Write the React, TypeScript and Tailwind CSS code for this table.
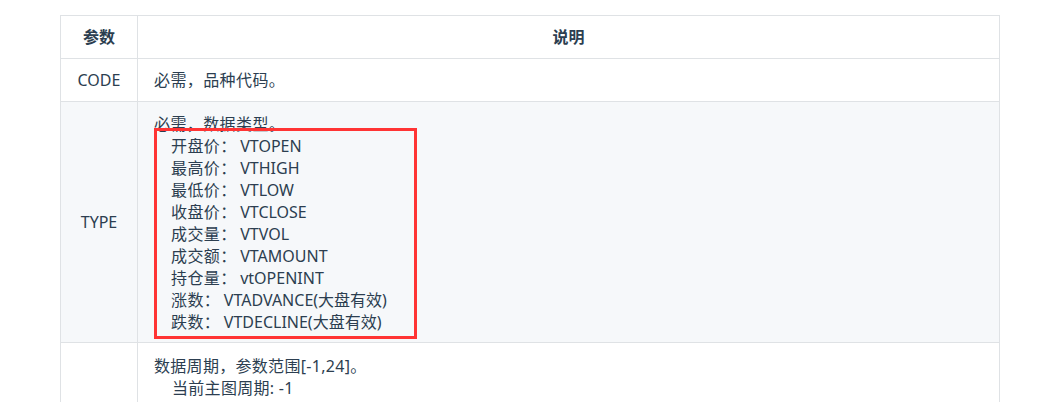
import React from "react";

const font = { fontFamily: '"Noto Sans", "Noto Sans CJK SC", sans-serif' };

export default function App() {
  const subLines = [
    ["开盘价", "VTOPEN"],
    ["最高价", "VTHIGH"],
    ["最低价", "VTLOW"],
    ["收盘价", "VTCLOSE"],
    ["成交量", "VTVOL"],
    ["成交额", "VTAMOUNT"],
    ["持仓量", "vtOPENINT"],
    ["涨数", "VTADVANCE(大盘有效)"],
    ["跌数", "VTDECLINE(大盘有效)"],
  ];
  return (
    <div className="w-[1050px] h-[402px] overflow-hidden bg-white text-[16px] text-[#2c3e50]" style={font}>
      <div className="pt-[15px] pl-[60px] w-[1000px]">
        <table className="w-[940px] border-collapse">
          <thead>
            <tr className="bg-white">
              <th className="w-[77px] border border-[#dfe2e5] h-[43px] p-0 font-bold leading-[22px]">参数</th>
              <th className="border border-[#dfe2e5] h-[43px] p-0 font-bold leading-[22px]">说明</th>
            </tr>
          </thead>
          <tbody>
            <tr className="bg-white">
              <td className="border border-[#dfe2e5] h-[43px] p-0 text-center leading-[22px]">CODE</td>
              <td className="border border-[#dfe2e5] h-[43px] py-0 px-4 leading-[22px] tracking-[0.4px]">必需，品种代码。</td>
            </tr>
            <tr className="bg-[#f6f8fa]">
              <td className="border border-[#dfe2e5] p-0 text-center leading-[22px]">TYPE</td>
              <td className="border border-[#dfe2e5] pt-[11px] pb-[9px] px-4 leading-[22px]">
                <div className="tracking-[0.4px]">必需，数据类型。</div>
                <div className="relative">
                  <div className="absolute top-[-7px] left-[0px] w-[263px] h-[211px] border-[3px] border-[#ff3434]"></div>
                  {subLines.map(([a, b]) => (
                    <div key={a} className="pl-[17px]">
                      <span className="tracking-[0.4px]">{a}</span>
                      <span className="inline-block w-[20px]">：</span>
                      <span>{b}</span>
                    </div>
                  ))}
                </div>
              </td>
            </tr>
            <tr className="bg-white">
              <td className="border border-[#dfe2e5] p-0 text-center leading-[22px]"></td>
              <td className="border border-[#dfe2e5] pt-[12px] pb-[10px] px-4 leading-[22px]">
                <div className="tracking-[0.3px]">数据周期，参数范围[-1,24]。</div>
                <div className="pl-[18px] tracking-[0.3px]">当前主图周期: -1</div>
                <div className="pl-[18px]">分笔成交: 0</div>
                <div className="pl-[18px]">1分钟: 1</div>
              </td>
            </tr>
          </tbody>
        </table>
      </div>
    </div>
  );
}
